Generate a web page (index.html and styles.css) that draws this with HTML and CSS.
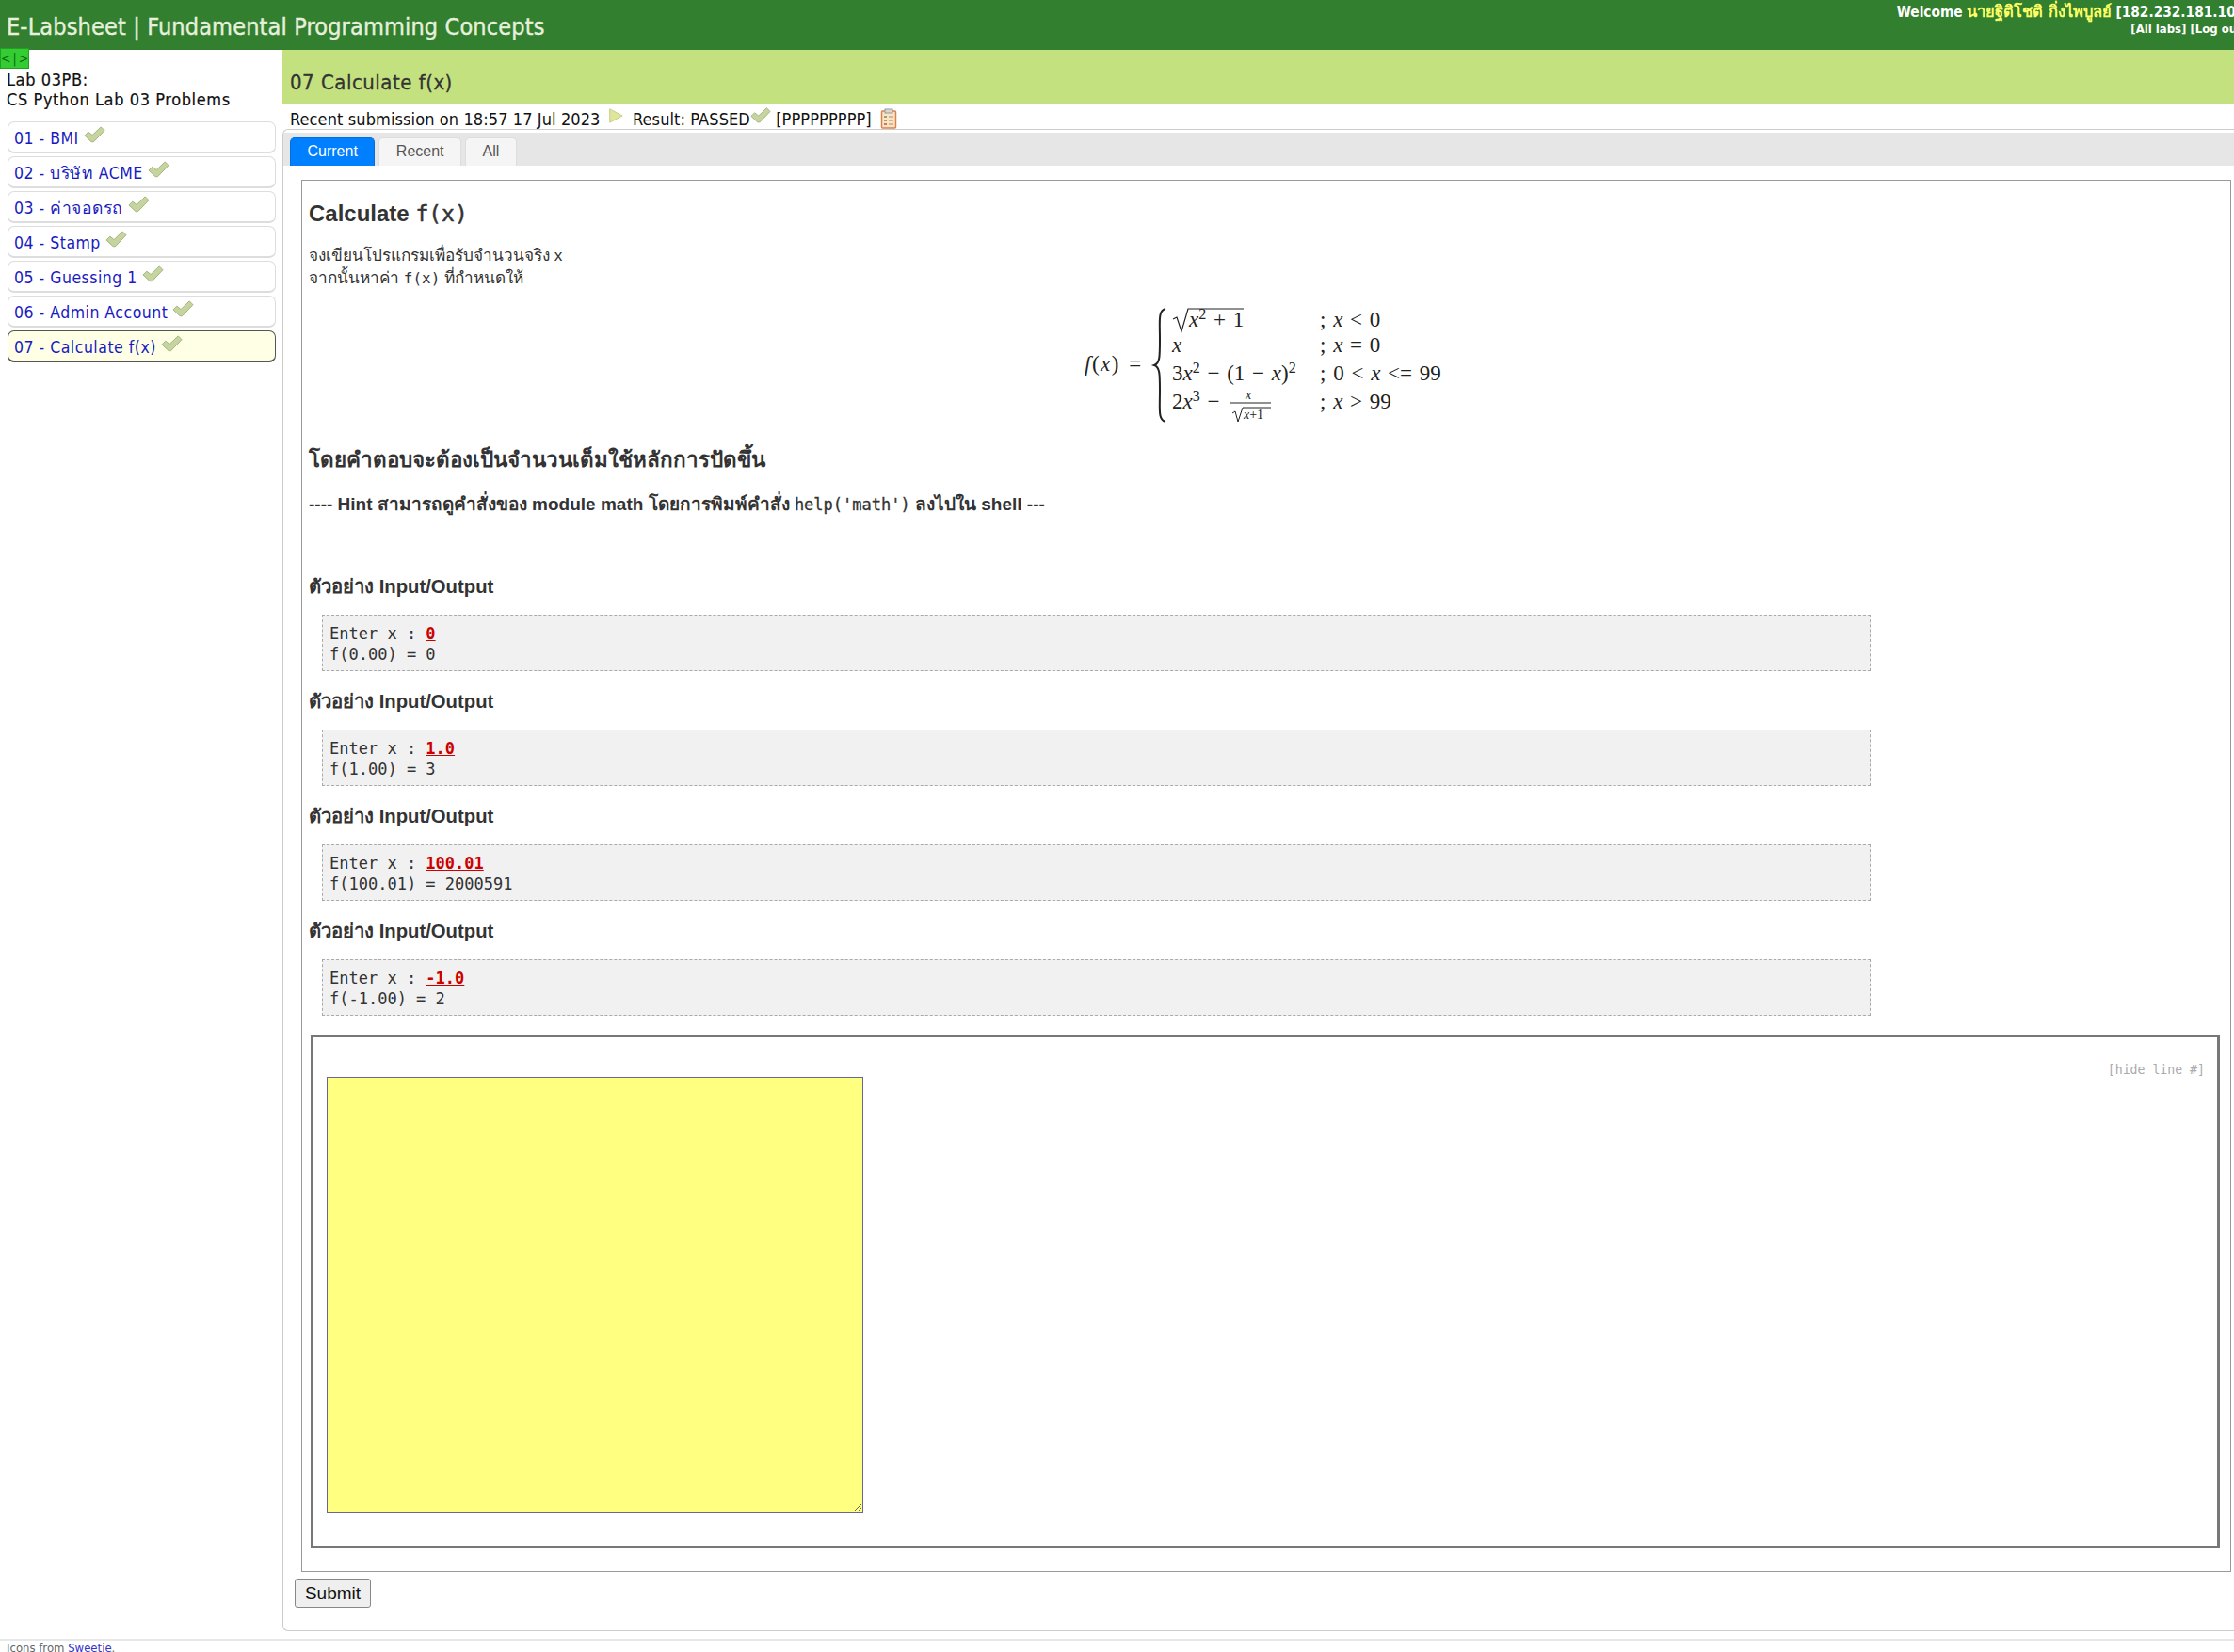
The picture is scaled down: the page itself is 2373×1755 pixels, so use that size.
FILE: index.html
```html
<!DOCTYPE html>
<html lang="th">
<head>
<meta charset="utf-8">
<title>E-Labsheet | Fundamental Programming Concepts</title>
<link rel="stylesheet" href="styles.css">
</head>
<body>
<svg class="defs" width="0" height="0">
    <symbol id="check" viewBox="0 0 24 24">
        <path d="M1 12.5 L5 8.5 L9.5 12 L19 3 L23 7 L11 19.5 L8.5 19.5 Z" fill="#c6d5a0" stroke="#a3b37c" stroke-width="1"/>
    </symbol>
</svg>
<div id="header">
    <div class="brand">E-Labsheet | Fundamental Programming Concepts</div>
    <div class="welcome">
        <div>Welcome <span class="user">นายฐิติโชติ กิ่งไพบูลย์</span> [182.232.181.10]</div>
        <div class="links"><a href="#">[All labs]</a> <a href="#">[Log out]</a></div>
    </div>
</div>
<div id="main">
    <div id="left">
        <div class="toggle">&lt;|&gt;</div>
        <div class="labname">Lab 03PB:<br>CS Python Lab 03 Problems</div>
        <ul class="tasks">
            <li><a href="#">01 - BMI</a><svg class="check"><use href="#check"/></svg></li>
            <li><a href="#">02 - บริษัท ACME</a><svg class="check"><use href="#check"/></svg></li>
            <li><a href="#">03 - ค่าจอดรถ</a><svg class="check"><use href="#check"/></svg></li>
            <li><a href="#">04 - Stamp</a><svg class="check"><use href="#check"/></svg></li>
            <li><a href="#">05 - Guessing 1</a><svg class="check"><use href="#check"/></svg></li>
            <li><a href="#">06 - Admin Account</a><svg class="check"><use href="#check"/></svg></li>
            <li class="active"><a href="#">07 - Calculate f(x)</a><svg class="check"><use href="#check"/></svg></li>
        </ul>
    </div>
    <div id="right">
        <div class="title">07 Calculate f(x)</div>
        <div class="recent">
            Recent submission on 18:57 17 Jul 2023
            <svg class="play" viewBox="0 0 20 20"><path d="M3 2 L18 10 L3 18 Z" fill="#dfe59a" stroke="#c3cc80"/></svg>
            Result: PASSED<svg class="check check-inline"><use href="#check"/></svg>
            [PPPPPPPPP]
            <svg class="clip" viewBox="0 0 18 22"><rect x="1.5" y="3" width="15" height="18" rx="1" fill="#fbe3c8" stroke="#d9824a" stroke-width="1.5"/><rect x="5" y="1" width="8" height="4" fill="#d8d8d8" stroke="#999" stroke-width="1"/><path d="M4 9h3M4 13h3" stroke="#6a9c3c" stroke-width="1.5"/><path d="M4 17h3" stroke="#c8503c" stroke-width="1.5"/><path d="M9 9h5M9 13h5M9 17h5" stroke="#c9a684" stroke-width="1.5"/></svg>
        </div>
        <div class="panel">
            <div class="tabs">
                <a class="tab tab-on" href="#">Current</a>
                <a class="tab" href="#">Recent</a>
                <a class="tab" href="#">All</a>
            </div>
            <div class="problem">
                <h2>Calculate <code>f(x)</code></h2>
                <p class="desc">จงเขียนโปรแกรมเพื่อรับจำนวนจริง x<br>จากนั้นหาค่า <code>f(x)</code> ที่กำหนดให้</p>
                <div class="formula">
                    <svg width="400" height="130" viewBox="1149 322 400 130">
                        <g class="math">
                            <text class="lhs" x="1152" y="393"><tspan font-style="italic">f</tspan>(<tspan font-style="italic">x</tspan>) =</text>
                            <path d="M1238 327 C1230 329 1232 340 1232 360 C1232 378 1232 385 1226 387 C1232 389 1232 396 1232 414 C1232 434 1230 445 1238 447" fill="none" stroke="#222" stroke-width="2"/>
                            <path d="M1246 338 L1250 336 L1255 351 L1262 327 H1321" fill="none" stroke="#222" stroke-width="1.2"/>
                            <text x="1263" y="346"><tspan font-style="italic">x</tspan><tspan class="sup" dy="-8">2</tspan><tspan dy="8"> + 1</tspan></text>
                            <text x="1245" y="373" font-style="italic">x</text>
                            <text x="1245" y="403">3<tspan font-style="italic">x</tspan><tspan class="sup" dy="-8">2</tspan><tspan dy="8"> − (1 − </tspan><tspan font-style="italic">x</tspan>)<tspan class="sup" dy="-8">2</tspan></text>
                            <text x="1245" y="433">2<tspan font-style="italic">x</tspan><tspan class="sup" dy="-8">3</tspan><tspan dy="8"> −</tspan></text>
                            <text class="small" x="1323" y="423" font-style="italic">x</text>
                            <path d="M1306 427 H1350" stroke="#222" stroke-width="1"/>
                            <path d="M1309 438 L1312 436 L1315 447 L1320 432 H1350" fill="none" stroke="#222" stroke-width="1"/>
                            <text class="small" x="1321" y="444"><tspan font-style="italic">x</tspan>+1</text>
                            <text x="1402" y="346">; <tspan font-style="italic">x</tspan> &lt; 0</text>
                            <text x="1402" y="373">; <tspan font-style="italic">x</tspan> = 0</text>
                            <text x="1402" y="403">; 0 &lt; <tspan font-style="italic">x</tspan> &lt;= 99</text>
                            <text x="1402" y="433">; <tspan font-style="italic">x</tspan> &gt; 99</text>
                        </g>
                    </svg>
                </div>
                <h3 class="rule">โดยคำตอบจะต้องเป็นจำนวนเต็มใช้หลักการปัดขึ้น</h3>
                <p class="hint">---- Hint สามารถดูคำสั่งของ module math โดยการพิมพ์คำสั่ง <code>help('math')</code> ลงไปใน shell ---</p>
                <div class="example example-first">
                    <h4>ตัวอย่าง Input/Output</h4>
                    <pre>Enter x : <b>0</b>
f(0.00) = 0</pre>
                </div>
                <div class="example">
                    <h4>ตัวอย่าง Input/Output</h4>
                    <pre>Enter x : <b>1.0</b>
f(1.00) = 3</pre>
                </div>
                <div class="example">
                    <h4>ตัวอย่าง Input/Output</h4>
                    <pre>Enter x : <b>100.01</b>
f(100.01) = 2000591</pre>
                </div>
                <div class="example">
                    <h4>ตัวอย่าง Input/Output</h4>
                    <pre>Enter x : <b>-1.0</b>
f(-1.00) = 2</pre>
                </div>
                <div class="editor">
                    <div class="hideline">[hide line #]</div>
                    <textarea class="code"></textarea>
                </div>
            </div>
            <button class="submit">Submit</button>
        </div>
    </div>
</div>
<div id="footer">Icons from <a href="#">Sweetie</a>.</div>
</body>
</html>
```

FILE: styles.css
```css
html, body {
    margin: 0;
    padding: 0;
    height: 1755px;
    overflow: hidden;
}

body {
    font-family: "DejaVu Sans", "Noto Sans CJK SC", sans-serif;
    font-stretch: condensed;
    background: #fff;
    color: #222;
}

a {
    color: #1a1ac0;
    text-decoration: none;
}

.defs {
    position: absolute;
}

#header {
    height: 53px;
    background: #317f2f;
    display: flex;
    justify-content: space-between;
    overflow: hidden;
}

.brand {
    padding-left: 7px;
    font-size: 25px;
    letter-spacing: 0.15px;
    line-height: 58px;
    color: #e6f0dc;
    -webkit-text-stroke: 0.4px #e6f0dc;
}

.welcome {
    margin-right: -8px;
    padding-top: 4px;
    text-align: right;
    font-size: 15.3px;
    font-weight: bold;
    line-height: 18px;
    color: #fff;
    white-space: nowrap;
}

.welcome a {
    color: #fff;
}

.links {
    margin-right: -6px;
    font-size: 13px;
}

.user {
    color: #ffff66;
    font-size: 16.5px;
}

#main {
    display: grid;
    grid-template-columns: 300px 1fr;
}

#left {
    position: relative;
}

.toggle {
    position: absolute;
    top: -2px;
    left: 0;
    width: 31px;
    height: 22px;
    box-sizing: border-box;
    border: 1px solid #22a022;
    background: #33cc33;
    color: #0a6a0a;
    font-size: 14px;
    letter-spacing: 2px;
    line-height: 20px;
    text-align: center;
}

.labname {
    padding: 21px 0 0 7px;
    font-size: 18px;
    letter-spacing: 0.6px;
    line-height: 21px;
    color: #111;
    -webkit-text-stroke: 0.2px #111;
}

.tasks {
    list-style: none;
    margin: 13px 0 0 8px;
    padding: 0;
    width: 285px;
}

.tasks li {
    box-sizing: border-box;
    height: 34px;
    margin-bottom: 3px;
    padding: 0 6px;
    border: 1px solid #ddd;
    border-bottom-width: 2px;
    border-radius: 7px;
    font-size: 17.5px;
    letter-spacing: 0.5px;
    line-height: 34px;
    white-space: nowrap;
}

.tasks li.active {
    background: #ffffe6;
    border-color: #555;
}

.check {
    width: 23px;
    height: 23px;
    margin-left: 5px;
    vertical-align: -2px;
}

#right {
    min-width: 0;
}

.title {
    height: 57px;
    padding-left: 8px;
    background: #c3e17f;
    font-size: 22px;
    letter-spacing: 0.5px;
    line-height: 70px;
    color: #333;
    -webkit-text-stroke: 0.3px #333;
}

.recent {
    height: 27px;
    padding-left: 8px;
    font-size: 18px;
    letter-spacing: 0.1px;
    line-height: 34px;
    color: #111;
    white-space: nowrap;
}

.play {
    width: 18px;
    height: 18px;
    margin: 0 4px 0 2px;
    vertical-align: 1px;
}

.check-inline {
    margin-left: 0;
    width: 22px;
    height: 22px;
    vertical-align: -1px;
}

.clip {
    width: 18px;
    height: 22px;
    margin-left: 4px;
    vertical-align: -4px;
}

.panel {
    height: 1596px;
    box-sizing: border-box;
    border: 1px solid #ccc;
    border-right: 0;
    border-radius: 6px 0 0 6px;
    font-family: "Liberation Sans", "Noto Sans CJK SC", sans-serif;
    font-stretch: normal;
}

.tabs {
    display: flex;
    gap: 4px;
    box-sizing: border-box;
    height: 35px;
    margin: 3px 0 0;
    padding: 5px 0 0 7px;
    background: #e6e6e6;
}

.tab {
    padding: 0 17.5px;
    border: 1px solid #ddd;
    border-bottom: 0;
    border-radius: 5px 5px 0 0;
    background: #f5f5f5;
    color: #555;
    font-size: 16px;
    line-height: 28px;
}

.tab-on {
    background: #007fff;
    border-color: #0070e0;
    color: #fff;
}

.problem {
    box-sizing: border-box;
    height: 1479px;
    margin: 15px 3px 0 19px;
    padding: 0 0 0 7px;
    border: 1px solid #999;
    color: #333;
}

code, pre {
    font-family: "DejaVu Sans Mono", "Noto Sans CJK SC", monospace;
}

.problem h2 {
    margin: 0;
    padding-top: 21px;
    font-size: 24px;
    line-height: 28px;
}

.problem h2 code {
    font-size: 23px;
    font-weight: normal;
    -webkit-text-stroke: 0.5px #333;
}

.desc {
    margin: 18px 0 0;
    font-size: 17.2px;
    line-height: 24px;
}

.desc code {
    font-size: 16px;
}

.formula {
    margin-top: 15px;
    height: 130px;
    text-align: center;
}

.math text {
    font-family: "Liberation Serif", serif;
    font-size: 23px;
    word-spacing: 2px;
    fill: #222;
    white-space: pre;
}

.math .lhs {
    letter-spacing: 1.5px;
}

.math .small {
    font-size: 14px;
}

.math .sup {
    font-size: 16px;
}

.rule {
    margin: 22px 0 0;
    font-size: 22.4px;
    line-height: 28px;
}

.hint {
    margin: 21px 0 0;
    font-size: 19px;
    font-weight: bold;
    line-height: 24px;
}

.hint code {
    font-size: 17px;
    font-weight: normal;
    -webkit-text-stroke: 0.3px #333;
}

.example {
    margin-top: 21px;
}

.example-first {
    margin-top: 64px;
}

.example h4 {
    margin: 0;
    font-size: 20.3px;
    line-height: 22px;
}

pre {
    box-sizing: border-box;
    width: 1645px;
    height: 60px;
    margin: 19px 0 0 14px;
    padding: 8px 9px 8px 7px;
    border: 1px dashed #aaa;
    background: #f1f1f1;
    font-size: 17px;
    line-height: 22px;
    color: #333;
}

pre b {
    color: #cc0000;
    text-decoration: underline;
}

.editor {
    position: relative;
    box-sizing: border-box;
    width: 2028px;
    height: 546px;
    margin: 20px 0 0 2px;
    padding: 42px 0 0 14px;
    border: 3px solid #777;
}

.hideline {
    position: absolute;
    top: 27px;
    right: 13px;
    font-family: "DejaVu Sans Mono", monospace;
    font-size: 13.2px;
    color: #aaa;
}

.code {
    display: block;
    box-sizing: border-box;
    width: 570px;
    height: 463px;
    padding: 0;
    border: 1px solid #666699;
    background: #ffff80;
}

.submit {
    display: block;
    width: 81px;
    height: 31px;
    margin: 7px 0 0 12px;
    padding: 0;
    border: 1px solid #888;
    border-radius: 3px;
    background: #efefef;
    font-family: "Liberation Sans", sans-serif;
    font-size: 19px;
    color: #111;
}

#footer {
    height: 14px;
    margin-top: 8px;
    padding-left: 7px;
    border-top: 2px solid #e8e8e8;
    font-size: 13px;
    line-height: 16px;
    color: #666;
}

#footer a {
    color: #3333cc;
}
```
